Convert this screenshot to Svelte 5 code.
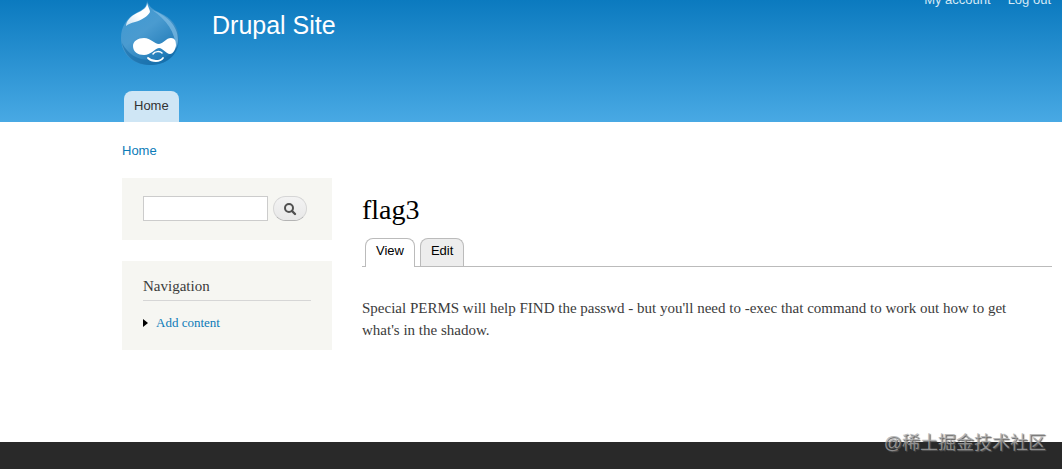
<script lang="ts">
    const siteName = 'Drupal Site';
    const userLinks = ['My account', 'Log out'];
    const mainMenu = ['Home'];
    const tabs = [
        { label: 'View', active: true },
        { label: 'Edit', active: false }
    ];
    const navigation = ['Add content'];

    let keys = $state('');
</script>

<div class="page">
    <header class="header">
        <div class="branding">
            <a href="#home" class="logo" aria-label="Home">
                <svg width="60" height="68" viewBox="0 0 60 68" aria-hidden="true">
                    <defs>
                        <linearGradient id="drop" x1="0" y1="0" x2="0.7" y2="1">
                            <stop offset="0" stop-color="#3c98d2" />
                            <stop offset="0.5" stop-color="#4a9bd0" />
                            <stop offset="1" stop-color="#1b76b4" />
                        </linearGradient>
                        <linearGradient id="shine" x1="1" y1="0" x2="0" y2="1">
                            <stop offset="0.5" stop-color="#ffffff" />
                            <stop offset="1" stop-color="#c8e2f3" />
                        </linearGradient>
                    </defs>
                    <path d="M27 1 C29 7 34 10 40 13 C51 18 59 26 59 39 C59 55 46 65 30 65 C13 65 1 54 1 38 C1 26 7 18 16 13 C22 10 27 7 27 1Z" fill="url(#drop)" />
                    <path d="M32 10 C46 15 58 25 58 40 C58 43 57 46 56 48 C55 32 47 20 32 10Z" fill="#7dbbe3" opacity="0.75" />
                    <path d="M2 43 C5 58 18 65 31 65 C43 65 54 59 58 46 C50 57 42 60 30 60 C17 60 8 54 2 43Z" fill="#1269a6" opacity="0.55" />
                    <path d="M27 3 C28 7 30 10 30 12 C28 16 22 20 15 22 C11 23 8 24 6 26 C6 21 11 16 17 13 C23 10 27 8 27 3Z" fill="url(#shine)" />
                    <path d="M24 38 C31 38 34 44 39 44 C44 43 46 38 51 38 C55 38 56 41 56 45 C56 49 53 54 50 54 C46 54 43 48 39 48 C34 49 31 55 24 55 C18 55 13 52 13 46 C13 41 18 38 24 38Z" fill="#ffffff" />
                    <path d="M33 54 C35 51 40 51 42 53" fill="none" stroke="#ffffff" stroke-width="1.5" stroke-linecap="round" />
                    <path d="M28 58 C32 62 40 62 43 58" fill="none" stroke="#ffffff" stroke-width="1.8" stroke-linecap="round" />
                </svg>
            </a>
            <a href="#home" class="site-name">{siteName}</a>
            <nav class="user-menu" aria-label="User menu">
                {#each userLinks as link}
                    <a href="#user">{link}</a>
                {/each}
            </nav>
        </div>
        <nav class="main-menu" aria-label="Main menu">
            {#each mainMenu as item}
                <a href="#home">{item}</a>
            {/each}
        </nav>
    </header>

    <div class="main">
        <nav class="breadcrumb" aria-label="Breadcrumb">
            <a href="#home">Home</a>
        </nav>

        <div class="columns">
            <aside class="sidebar">
                <form class="block search" onsubmit={(e) => e.preventDefault()}>
                    <input type="text" aria-label="Search" bind:value={keys} />
                    <button type="submit" aria-label="Search">
                        <svg width="14" height="14" viewBox="0 0 14 14" aria-hidden="true">
                            <circle cx="6" cy="6" r="4" fill="none" stroke="#505050" stroke-width="2" />
                            <path d="M9 9 L12 12" stroke="#505050" stroke-width="2.4" stroke-linecap="round" />
                        </svg>
                    </button>
                </form>

                <section class="block">
                    <h2>Navigation</h2>
                    <ul class="menu">
                        {#each navigation as item}
                            <li>
                                <svg width="5" height="8" viewBox="0 0 5 8" aria-hidden="true">
                                    <path d="M0 0 L5 4 L0 8Z" fill="#000000" />
                                </svg>
                                <a href="#add">{item}</a>
                            </li>
                        {/each}
                    </ul>
                </section>
            </aside>

            <main class="content">
                <h1>flag3</h1>
                <nav class="tabs" aria-label="Primary tabs">
                    {#each tabs as tab}
                        <a href="#{tab.label}" class:active={tab.active}>{tab.label}</a>
                    {/each}
                </nav>
                <p>
                    Special PERMS will help FIND the passwd - but you'll need to -exec that command to
                    work out how to get what's in the shadow.
                </p>
            </main>
        </div>
    </div>

    <footer class="footer"></footer>
    <div class="watermark">@稀土掘金技术社区</div>
</div>

<style>
    :global(body) {
        margin: 0;
        background: #ffffff;
    }

    .page {
        position: relative;
        display: flex;
        flex-direction: column;
        min-height: 100vh;
        font-family: "Liberation Serif", "Times New Roman", serif;
        color: #3b3b3b;
    }

    a {
        color: #0c7bb8;
        text-decoration: none;
    }

    a:hover {
        text-decoration: underline;
    }

    .header {
        overflow: hidden;
        padding: 0 11px 0 120px;
        background: linear-gradient(#0b7abf, #48a9e4);
        font-family: "Liberation Sans", Arial, sans-serif;
    }

    .branding {
        display: flex;
        align-items: flex-start;
        height: 91px;
    }

    .logo svg {
        display: block;
    }

    .site-name {
        margin: 10px 0 0 32px;
        font-size: 25px;
        line-height: 30px;
        color: #fffeff;
    }

    .user-menu {
        display: flex;
        gap: 17px;
        margin: -8px 0 0 auto;
        font-size: 13px;
        line-height: 16px;
    }

    .user-menu a {
        color: #d4e9f6;
    }

    .main-menu {
        display: flex;
        padding-left: 4px;
    }

    .main-menu a {
        padding: 0 10px 2px;
        border-radius: 8px 8px 0 0;
        background: #cfe6f5;
        color: #333333;
        font-size: 13px;
        line-height: 29px;
    }

    .main {
        padding: 20px 10px 92px 122px;
    }

    .breadcrumb {
        margin-bottom: 18px;
        font-family: "Liberation Sans", Arial, sans-serif;
        font-size: 13px;
        line-height: 18px;
    }

    .columns {
        display: grid;
        grid-template-columns: 210px 1fr;
        gap: 30px;
    }

    .sidebar {
        display: flex;
        flex-direction: column;
        gap: 21px;
    }

    .block {
        padding: 16px 21px 18px;
        background: #f6f6f2;
    }

    .search {
        display: flex;
        gap: 5px;
        padding: 18px 21px 19px;
    }

    .search input {
        box-sizing: border-box;
        width: 125px;
        height: 25px;
        padding: 2px 4px;
        border: 1px solid #cccccc;
        background: #ffffff;
        font-size: 13px;
    }

    .search button {
        display: flex;
        align-items: center;
        justify-content: center;
        width: 34px;
        height: 25px;
        padding: 0;
        border: 1px solid #d6d6d6;
        border-bottom-color: #b4b4b4;
        border-radius: 13px;
        background: linear-gradient(#f3f3f3, #e8e8e8);
        cursor: pointer;
    }

    h2 {
        margin: 0 0 13px;
        padding-bottom: 5px;
        border-bottom: 1px solid #d6d6d6;
        font-size: 15px;
        font-weight: normal;
        line-height: 18px;
    }

    .menu {
        margin: 0;
        padding: 0;
        list-style: none;
    }

    .menu li {
        display: flex;
        align-items: center;
        gap: 8px;
        font-size: 13px;
        line-height: 18px;
    }

    h1 {
        margin: 16px 0 12px;
        color: #000000;
        font-size: 28px;
        font-weight: normal;
        line-height: 32px;
    }

    .tabs {
        display: flex;
        gap: 5px;
        padding-left: 3px;
        border-bottom: 1px solid #bbbbbb;
        font-family: "Liberation Sans", Arial, sans-serif;
        font-size: 13px;
    }

    .tabs a {
        padding: 0 10px 3px;
        border: 1px solid #bbbbbb;
        border-bottom: 0;
        border-radius: 8px 8px 0 0;
        background: #ededed;
        color: #000000;
        line-height: 24px;
    }

    .tabs a.active {
        margin-bottom: -1px;
        padding-bottom: 4px;
        background: #ffffff;
    }

    .content p {
        margin: 30px 0 0;
        padding-right: 20px;
        font-size: 15px;
        line-height: 22px;
    }

    .footer {
        flex: 1;
        min-height: 27px;
        background: #292929;
    }

    .watermark {
        position: absolute;
        right: 16px;
        bottom: 14px;
        color: rgba(170, 170, 170, 0.75);
        font-family: "Liberation Sans", "Noto Sans CJK SC", sans-serif;
        font-size: 18px;
        line-height: 24px;
        text-shadow: 1px 1px 1px #555555;
    }
</style>
